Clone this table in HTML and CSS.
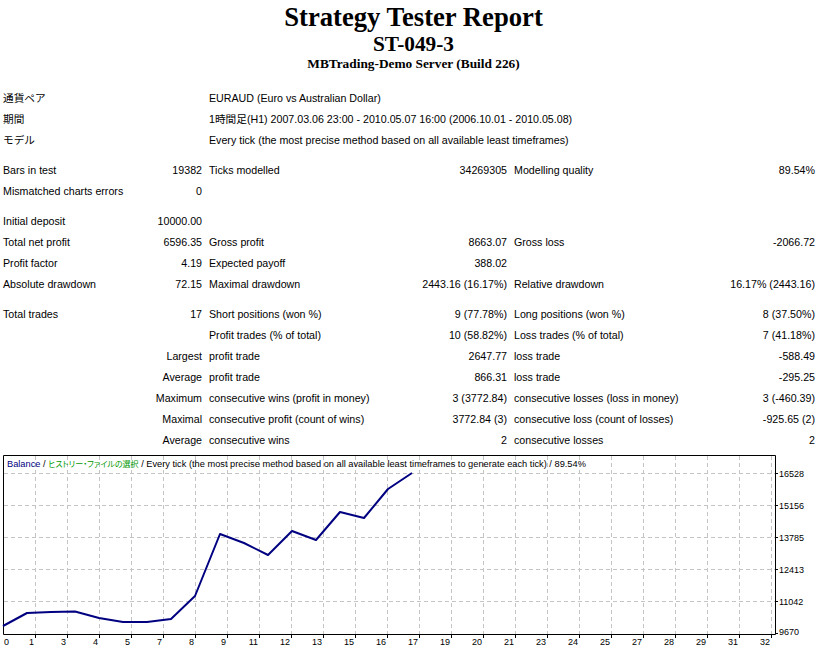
FILE: index.html
```html
<!DOCTYPE html>
<html lang="ja">
<head>
<meta charset="utf-8">
<title>Strategy Tester: ST-049-3</title>
<link rel="stylesheet" href="styles.css">
</head>
<body>
<div class="report">
  <header class="head">
    <div class="t1">Strategy Tester Report</div>
    <div class="t2">ST-049-3</div>
    <div class="t3">MBTrading-Demo Server (Build 226)</div>
  </header>

  <section class="grp first">
    <div class="c s2">通貨ペア</div><div class="c s4">EURAUD (Euro vs Australian Dollar)</div>
    <div class="c s2">期間</div><div class="c s4">1時間足(H1) 2007.03.06 23:00 - 2010.05.07 16:00 (2006.10.01 - 2010.05.08)</div>
    <div class="c s2">モデル</div><div class="c s4">Every tick (the most precise method based on all available least timeframes)</div>
  </section>

  <section class="grp">
    <div class="c">Bars in test</div><div class="c r">19382</div><div class="c">Ticks modelled</div><div class="c r">34269305</div><div class="c">Modelling quality</div><div class="c r">89.54%</div>
    <div class="c">Mismatched charts errors</div><div class="c r">0</div><div class="c s4"></div>
  </section>

  <section class="grp">
    <div class="c">Initial deposit</div><div class="c r">10000.00</div><div class="c s4"></div>
    <div class="c">Total net profit</div><div class="c r">6596.35</div><div class="c">Gross profit</div><div class="c r">8663.07</div><div class="c">Gross loss</div><div class="c r">-2066.72</div>
    <div class="c">Profit factor</div><div class="c r">4.19</div><div class="c">Expected payoff</div><div class="c r">388.02</div><div class="c s2"></div>
    <div class="c">Absolute drawdown</div><div class="c r">72.15</div><div class="c">Maximal drawdown</div><div class="c r">2443.16 (16.17%)</div><div class="c">Relative drawdown</div><div class="c r">16.17% (2443.16)</div>
  </section>

  <section class="grp">
    <div class="c">Total trades</div><div class="c r">17</div><div class="c">Short positions (won %)</div><div class="c r">9 (77.78%)</div><div class="c">Long positions (won %)</div><div class="c r">8 (37.50%)</div>
    <div class="c s2 r"></div><div class="c">Profit trades (% of total)</div><div class="c r">10 (58.82%)</div><div class="c">Loss trades (% of total)</div><div class="c r">7 (41.18%)</div>
    <div class="c s2 r">Largest</div><div class="c">profit trade</div><div class="c r">2647.77</div><div class="c">loss trade</div><div class="c r">-588.49</div>
    <div class="c s2 r">Average</div><div class="c">profit trade</div><div class="c r">866.31</div><div class="c">loss trade</div><div class="c r">-295.25</div>
    <div class="c s2 r">Maximum</div><div class="c">consecutive wins (profit in money)</div><div class="c r">3 (3772.84)</div><div class="c">consecutive losses (loss in money)</div><div class="c r">3 (-460.39)</div>
    <div class="c s2 r">Maximal</div><div class="c">consecutive profit (count of wins)</div><div class="c r">3772.84 (3)</div><div class="c">consecutive loss (count of losses)</div><div class="c r">-925.65 (2)</div>
    <div class="c s2 r">Average</div><div class="c">consecutive wins</div><div class="c r">2</div><div class="c">consecutive losses</div><div class="c r">2</div>
  </section>

  <svg class="chart" width="820" height="200" viewBox="0 0 820 200" xmlns="http://www.w3.org/2000/svg">
    <path class="grid" d="M35.5 5V183M67.5 5V183M99.5 5V183M131.5 5V183M163.5 5V183M195.5 5V183M227.5 5V183M259.5 5V183M291.5 5V183M323.5 5V183M355.5 5V183M387.5 5V183M419.5 5V183M451.5 5V183M483.5 5V183M515.5 5V183M547.5 5V183M579.5 5V183M611.5 5V183M643.5 5V183M675.5 5V183M707.5 5V183M739.5 5V183M771.5 5V183"/>
    <path class="grid" d="M4 22.5H775M4 54.5H775M4 86.5H775M4 118.5H775M4 150.5H775"/>
    <path class="frame" d="M3.5 183.5V4.5H775.5V183.5H3.5"/>
    <path class="frame" d="M776 22.5H778M776 54.5H778M776 86.5H778M776 118.5H778M776 150.5H778M776 182.5H778"/>
    <path class="frame" d="M35.5 184V187M67.5 184V187M99.5 184V187M131.5 184V187M163.5 184V187M195.5 184V187M227.5 184V187M259.5 184V187M291.5 184V187M323.5 184V187M355.5 184V187M387.5 184V187M419.5 184V187M451.5 184V187M483.5 184V187M515.5 184V187M547.5 184V187M579.5 184V187M611.5 184V187M643.5 184V187M675.5 184V187M707.5 184V187M739.5 184V187M771.5 184V187"/>
    <polyline class="curve" points="3,175 27,162 51,161 75,160.5 99,167 123,171 147,171 171,168 195,145 220,83 244,92 268,104 292,80 316,89 340,61 364,67 388,38 412,22"/>
    <text class="legend" x="7" y="16"><tspan class="navy">Balance</tspan> / <tspan class="green">ヒストリー・ファイルの選択</tspan> / Every tick (the most precise method based on all available least timeframes to generate each tick) / 89.54%</text>
    <g class="lbl">
      <text x="779" y="25.5">16528</text>
      <text x="779" y="57.5">15156</text>
      <text x="779" y="89.5">13785</text>
      <text x="779" y="121.5">12413</text>
      <text x="779" y="153.5">11042</text>
      <text x="779" y="184">9670</text>
    </g>
    <g class="lbl xl">
      <text class="start" x="4" y="194">0</text>
      <text x="34" y="194">1</text>
      <text x="66" y="194">3</text>
      <text x="98" y="194">4</text>
      <text x="130" y="194">5</text>
      <text x="162" y="194">7</text>
      <text x="194" y="194">8</text>
      <text x="226" y="194">9</text>
      <text x="258" y="194">11</text>
      <text x="290" y="194">12</text>
      <text x="322" y="194">13</text>
      <text x="354" y="194">15</text>
      <text x="386" y="194">16</text>
      <text x="418" y="194">17</text>
      <text x="450" y="194">19</text>
      <text x="482" y="194">20</text>
      <text x="514" y="194">21</text>
      <text x="546" y="194">23</text>
      <text x="578" y="194">24</text>
      <text x="610" y="194">25</text>
      <text x="642" y="194">27</text>
      <text x="674" y="194">28</text>
      <text x="706" y="194">29</text>
      <text x="738" y="194">31</text>
      <text x="770" y="194">32</text>
    </g>
  </svg>
</div>
</body>
</html>
```

FILE: styles.css
```css
html, body {
  margin: 0;
  padding: 0;
  background: #fff;
}
body {
  width: 830px;
  height: 656px;
  overflow: hidden;
  color: #000;
}
.report {
  width: 830px;
}
.head {
  width: 827px;
  margin-top: 2px;
  text-align: center;
  font-family: "Liberation Serif", "Times New Roman", serif;
  font-weight: bold;
}
.t1 {
  font-size: 26.67px;
  line-height: 30px;
}
.t2 {
  font-size: 21.33px;
  line-height: 24px;
}
.t3 {
  font-size: 13.33px;
  line-height: 15px;
}
.grp {
  display: grid;
  grid-template-columns: 140px 64px 170px 133px 170px 136px;
  grid-auto-rows: 20px;
  column-gap: 1px;
  row-gap: 1px;
  width: 820px;
  margin-top: 10px;
  font-family: "Liberation Sans", Arial, "Noto Sans CJK JP", sans-serif;
  font-size: 10.67px;
}
.grp.first {
  margin-top: 17px;
}
.c {
  padding: 0 3px;
  line-height: 20px;
  white-space: nowrap;
}
.r {
  text-align: right;
}
.s2 {
  grid-column: span 2;
}
.s4 {
  grid-column: span 4;
}
.chart {
  display: block;
  margin-top: 1px;
}
.grid {
  fill: none;
  stroke: #c4c4c4;
  stroke-width: 1;
  stroke-dasharray: 4 3;
}
.frame {
  fill: none;
  stroke: #000;
  stroke-width: 1;
}
.curve {
  fill: none;
  stroke: #000080;
  stroke-width: 2;
  stroke-linejoin: round;
}
.legend {
  font-family: "Liberation Sans", Arial, "Noto Sans CJK JP", sans-serif;
  font-size: 9.25px;
  fill: #000;
}
.navy {
  fill: #000080;
}
.green {
  fill: #009900;
  font-family: "Noto Sans CJK JP", sans-serif;
  font-size: 8px;
  font-feature-settings: "palt";
}
.lbl {
  font-family: "Liberation Sans", Arial, sans-serif;
  font-size: 9px;
  fill: #000;
}
.xl text {
  text-anchor: end;
}
.xl text.start {
  text-anchor: start;
}
```
